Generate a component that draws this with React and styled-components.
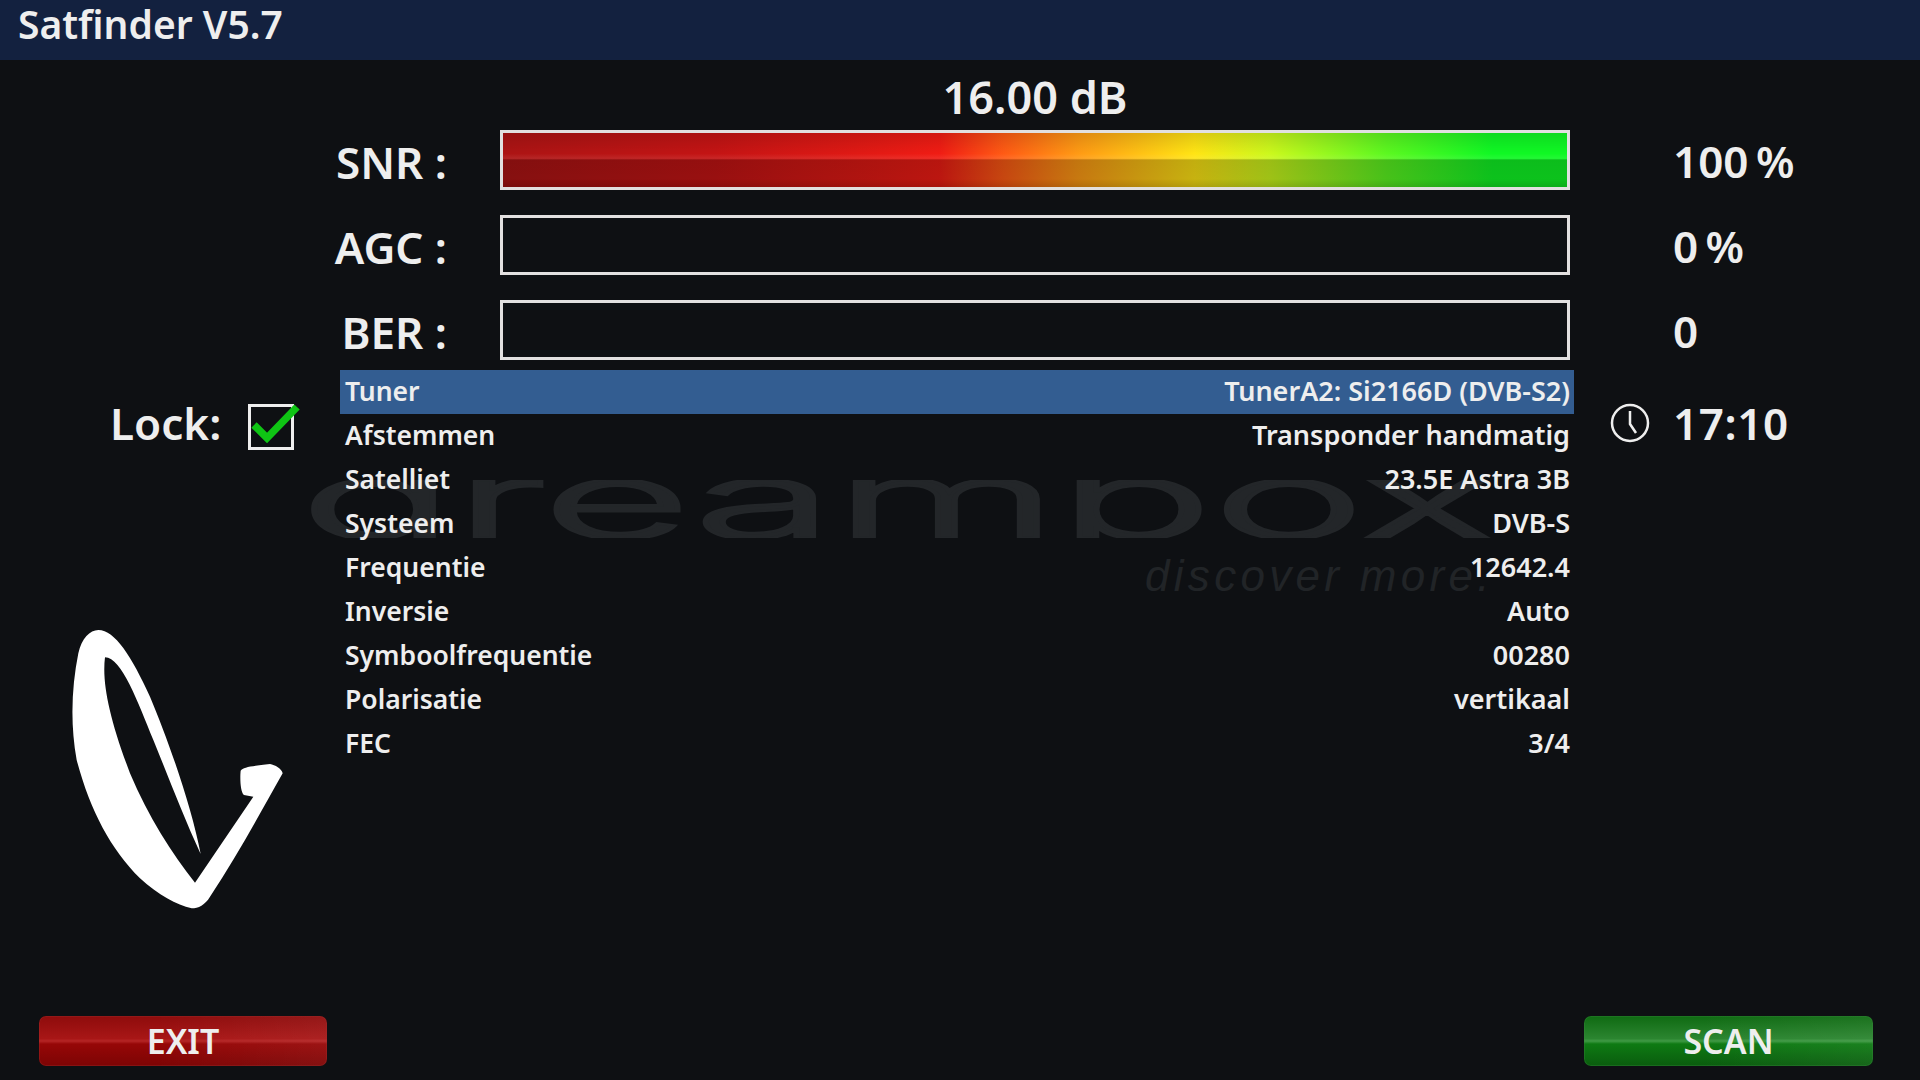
import React from 'react'
import styled, { createGlobalStyle } from 'styled-components'

const GlobalStyle = createGlobalStyle`
  html, body {
    margin: 0;
    padding: 0;
    background: #0e1013;
  }
`

const Screen = styled.div`
  position: relative;
  width: 1920px;
  height: 1080px;
  overflow: hidden;
  background: #0e1013;
  color: #eeeeee;
  font-family: "Noto Sans", sans-serif;
`

const TitleBar = styled.header`
  height: 60px;
  background: #13213f;
  padding-left: 18px;
  font-size: 39px;
  font-weight: 600;
  line-height: 48px;
`

const Body = styled.div`
  display: grid;
  grid-template-columns: 340px 1234px 1fr;
  height: 1020px;
`

const LeftCol = styled.div`
  display: flex;
  flex-direction: column;
  padding: 338px 0 14px;
`

const LockRow = styled.div`
  display: flex;
  align-items: center;
  height: 50px;
  padding-left: 110px;
  gap: 27px;
  font-size: 44px;
  font-weight: 600;
`

const LockBox = styled.div`
  position: relative;
  width: 40px;
  height: 40px;
  margin-top: 7px;
  border: 3px solid #eeeeee;

  svg {
    position: absolute;
    left: 0;
    top: -9px;
  }
`

const Dish = styled.svg`
  display: block;
  margin: 152px 0 0 40px;
`

const Button = styled.div`
  width: 288px;
  height: 50px;
  margin-top: auto;
  border-radius: 7px;
  display: flex;
  align-items: center;
  justify-content: center;
  font-size: 34px;
  font-weight: 600;
`

const RedButton = styled(Button)`
  margin-left: 39px;
  background:
    linear-gradient(90deg, rgba(255,255,255,0) 40%, rgba(255,255,255,0.05) 100%),
    linear-gradient(180deg, #8e0c0c 0%, #a81616 45%, #b52525 50%, #960707 56%, #7c0404 100%);
  box-shadow: inset 0 0 0 1px #a0303055;
`

const GreenButton = styled(Button)`
  margin-left: 10px;
  width: 289px;
  background:
    linear-gradient(90deg, rgba(255,255,255,0) 40%, rgba(255,255,255,0.05) 100%),
    linear-gradient(180deg, #0f6a12 0%, #2b8530 45%, #3f9a44 50%, #0e7a13 56%, #0a5c0e 100%);
  box-shadow: inset 0 0 0 1px #3a8a3e55;
`

const MiddleCol = styled.div`
  position: relative;
  display: flex;
  flex-direction: column;
`

const Reading = styled.div`
  height: 70px;
  margin-left: 160px;
  width: 1070px;
  text-align: center;
  font-size: 45px;
  font-weight: 600;
  line-height: 73px;
`

const MeterRow = styled.div`
  display: flex;
  align-items: center;
  height: 60px;
  margin-bottom: 25px;
`

const MeterLabel = styled.div`
  display: flex;
  justify-content: flex-end;
  width: 107px;
  margin-top: 3px;
  white-space: nowrap;
  font-size: 44px;
  font-weight: 600;
`

const Meter = styled.div`
  margin-left: 53px;
  width: 1070px;
  height: 60px;
  box-sizing: border-box;
  border: 3px solid #e2e0e0;
  background: ${p => (p.$filled ? `
    linear-gradient(180deg, rgba(0,0,0,0.12) 0%, rgba(0,0,0,0) 38%, rgba(255,255,255,0.08) 47%, rgba(0,0,0,0.24) 50%, rgba(0,0,0,0.22) 85%, rgba(0,0,0,0.3) 100%),
    linear-gradient(90deg, #ac1414 0%, #c41414 20%, #f01c14 41%, #ff5a14 47%, #ff9a14 54%, #ffe414 65%, #ccf81c 72%, #5cf820 83%, #10f824 93%, #10f824 100%)
  ` : 'transparent')};
`

const List = styled.div`
  position: relative;
  margin-top: -15px;
`

const ListRow = styled.div`
  position: relative;
  display: flex;
  justify-content: space-between;
  height: 44px;
  padding: 0 4px 0 5px;
  font-size: 27px;
  line-height: 42px;
  font-weight: 600;
  background: ${p => (p.$active ? '#335d91' : 'transparent')};
`

const RowName = styled.span`
  font-size: 26.5px;
`

const Watermark = styled.div`
  position: absolute;
  left: -40px;
  top: 110px;
  width: 1200px;
`

const WatermarkWord = styled.div`
  height: 58px;
  overflow: hidden;
  font-family: Inter, sans-serif;
  font-weight: 300;
  font-size: 106px;
  line-height: 57px;
  color: #232629;
  -webkit-text-stroke: 2.5px #232629;
  white-space: nowrap;

  span {
    display: block;
    margin-top: -9px;
    transform-origin: left top;
    transform: scaleX(2.42);
  }
`

const Tagline = styled.div`
  position: absolute;
  left: 845px;
  top: 71px;
  white-space: nowrap;
  font-family: "Liberation Sans", sans-serif;
  font-style: italic;
  font-size: 44px;
  letter-spacing: 4.3px;
  color: #212427;
`

const RightCol = styled.div`
  display: flex;
  flex-direction: column;
  padding: 59px 0 14px;
`

const Value = styled.div`
  height: 85px;
  margin-left: 99px;
  font-size: 44px;
  font-weight: 600;
  line-height: 85px;
  word-spacing: -4px;
  white-space: nowrap;
`

const ClockRow = styled.div`
  display: flex;
  align-items: center;
  gap: 23px;
  height: 50px;
  margin-top: 24px;
  padding-left: 36px;
  font-size: 44px;
  font-weight: 600;
  letter-spacing: 0.6px;
`

const rows = [
  ['Tuner', 'TunerA2: Si2166D (DVB-S2)'],
  ['Afstemmen', 'Transponder handmatig'],
  ['Satelliet', '23.5E Astra 3B'],
  ['Systeem', 'DVB-S'],
  ['Frequentie', '12642.4'],
  ['Inversie', 'Auto'],
  ['Symboolfrequentie', '00280'],
  ['Polarisatie', 'vertikaal'],
  ['FEC', '3/4'],
]

const meters = [
  { label: 'SNR :', filled: true },
  { label: 'AGC :', filled: false },
  { label: 'BER :', filled: false },
]

const App = () => (
  <Screen>
    <GlobalStyle />
    <TitleBar>Satfinder V5.7</TitleBar>
    <Body>
      <LeftCol>
        <LockRow>
          Lock:
          <LockBox>
            <svg width="52" height="52" viewBox="0 0 52 52">
              <path d="M3 27 L16 40 L46 9" fill="none" stroke="#0fc414" strokeWidth="7.5" />
            </svg>
          </LockBox>
        </LockRow>
        <Dish width="280" height="320" viewBox="0 0 840 960">
          <path
            fill="#ffffff"
            d="M175 90 C225 90 275 170 330 290 C385 420 455 620 482 762 C430 650 385 530 340 420 C295 310 245 172 195 172 C185 250 210 360 270 520 C325 650 395 760 465 848 L640 590 L612 585 C600 575 600 530 602 512 C610 500 640 498 690 492 C705 495 725 505 728 520 C660 640 590 770 510 890 C495 915 475 925 455 925 C410 915 355 885 300 835 C210 745 150 630 110 480 C90 370 95 260 115 160 C125 115 150 90 175 90 Z"
          />
        </Dish>
        <RedButton>EXIT</RedButton>
      </LeftCol>
      <MiddleCol>
        <Reading>16.00 dB</Reading>
        {meters.map(m => (
          <MeterRow key={m.label}>
            <MeterLabel>{m.label}</MeterLabel>
            <Meter $filled={m.filled} />
          </MeterRow>
        ))}
        <List>
          <Watermark>
            <WatermarkWord><span>dreambox</span></WatermarkWord>
            <Tagline>discover more.</Tagline>
          </Watermark>
          {rows.map(([name, value], i) => (
            <ListRow key={name} $active={i === 0}>
              <RowName>{name}</RowName>
              <span>{value}</span>
            </ListRow>
          ))}
        </List>
      </MiddleCol>
      <RightCol>
        <Value>100 %</Value>
        <Value>0 %</Value>
        <Value>0</Value>
        <ClockRow>
          <svg width="40" height="40" viewBox="0 0 40 40" fill="none" stroke="#eeeeee" strokeWidth="2.5">
            <circle cx="20" cy="20" r="18" />
            <path d="M20 8 V21 L26 30" />
          </svg>
          17:10
        </ClockRow>
        <GreenButton>SCAN</GreenButton>
      </RightCol>
    </Body>
  </Screen>
)

export default App
